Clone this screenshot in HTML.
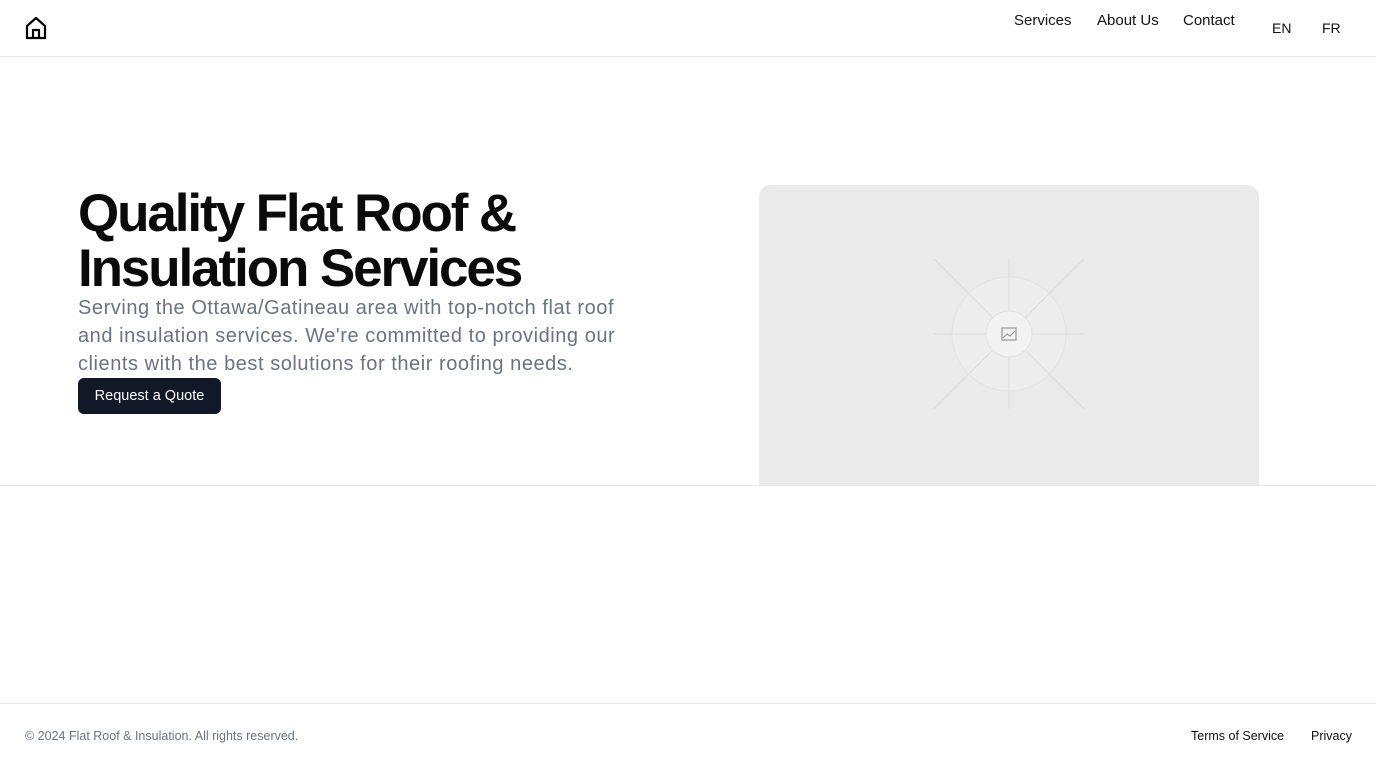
<!DOCTYPE html>
<html><head><meta charset="utf-8"><style>
*{margin:0;padding:0;box-sizing:border-box}
body{width:1376px;height:768px;background:#fff;font-family:"Liberation Sans",sans-serif;color:#111;position:relative;overflow:hidden}
header{position:absolute;top:0;left:0;width:1376px;height:57px;border-bottom:1px solid #e5e7eb}
.nav a{position:absolute;top:12px;font-size:15px;color:#111;text-decoration:none}
.lang{position:absolute;top:20px;font-size:14px;color:#111}
h1{position:absolute;left:78px;top:186px;font-size:53px;line-height:55px;font-weight:700;letter-spacing:-2.1px;color:#0a0a0a}
p.lead{position:absolute;left:78px;top:294px;width:560px;font-size:20px;line-height:28px;color:#6b7280;letter-spacing:0.55px}
.btn{position:absolute;left:78px;top:378px;width:143px;height:36px;background:#111827;color:#fff;border-radius:6px;font-size:14.5px;line-height:36px;text-align:center}
.img{position:absolute;left:759px;top:185px;width:500px;height:300px;background:#eaeaea;border-radius:12px 12px 0 0}
.sep{position:absolute;left:0;top:485px;width:1376px;border-top:1px solid #e5e7eb}
footer{position:absolute;left:0;top:703px;width:1376px;height:65px;border-top:1px solid #e5e7eb;font-size:12.5px}
</style></head><body>
<header>
<svg style="position:absolute;left:25px;top:16px" width="22" height="24" viewBox="0 0 22 24" fill="none" stroke="#000" stroke-width="2.2" stroke-linejoin="round"><path d="M2 10 L11 2 L20 10 V22 H2 Z"/><path d="M8 22 V14 H14 V22"/></svg>
<div class="nav"><a style="left:1014px">Services</a><a style="left:1097px">About Us</a><a style="left:1183px">Contact</a></div>
<span class="lang" style="left:1272px">EN</span><span class="lang" style="left:1322px">FR</span>
</header>
<h1>Quality Flat Roof &amp;<br>Insulation Services</h1>
<p class="lead">Serving the Ottawa/Gatineau area with top-notch flat roof and insulation services. We're committed to providing our clients with the best solutions for their roofing needs.</p>
<div class="btn">Request a Quote</div>
<div class="img">
<svg style="position:absolute;left:0;top:0" width="500" height="300" viewBox="759 185 500 300">
<g stroke="#dcdcdc" stroke-width="1">
<line x1="1009" y1="259" x2="1009" y2="409"/><line x1="934" y1="334" x2="1084" y2="334"/>
<line x1="934" y1="259" x2="1084" y2="409"/><line x1="1084" y1="259" x2="934" y2="409"/>
</g>
<circle cx="1009" cy="334" r="57" fill="#efefef" fill-opacity="0.6" stroke="#e2e2e2"/>
<g stroke="#dcdcdc"><line x1="1009" y1="277" x2="1009" y2="391"/><line x1="952" y1="334" x2="1066" y2="334"/><line x1="969" y1="294" x2="1049" y2="374"/><line x1="1049" y1="294" x2="969" y2="374"/></g>
<circle cx="1009" cy="334" r="23" fill="#f2f2f2" stroke="#e0e0e0"/>
<rect x="1002" y="328" width="14" height="12" fill="none" stroke="#999" stroke-width="1.2"/>
<path d="M1003 338 L1007 334 L1010 336 L1015 331" fill="none" stroke="#999" stroke-width="1.2"/>
</svg>
</div>
<div class="sep"></div>
<footer>
<span style="position:absolute;left:25px;top:25px;color:#6b7280">© 2024 Flat Roof &amp; Insulation. All rights reserved.</span>
<span style="position:absolute;left:1191px;top:25px">Terms of Service</span>
<span style="position:absolute;left:1311px;top:25px">Privacy</span>
</footer>
</body></html>
